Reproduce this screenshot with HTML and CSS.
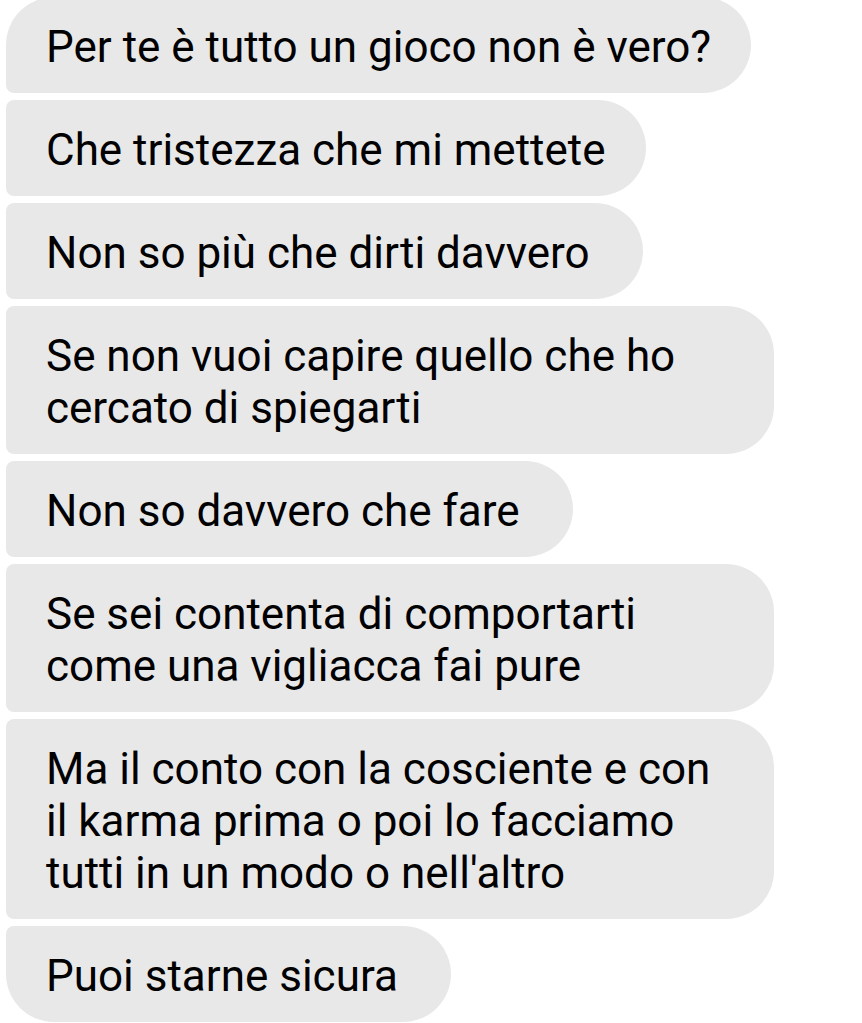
FILE: index.html
```html
<!DOCTYPE html>
<html lang="it">
<head>
<meta charset="utf-8">
<link rel="stylesheet" href="styles.css">
</head>
<body>
<div class="thread">
  <div class="bubble first">Per te è tutto un gioco non è vero?</div>
  <div class="bubble">Che tristezza che mi mettete</div>
  <div class="bubble roomy">Non so più che dirti davvero</div>
  <div class="bubble">Se non vuoi capire quello che ho cercato di spiegarti</div>
  <div class="bubble roomy">Non so davvero che fare</div>
  <div class="bubble">Se sei contenta di comportarti come una vigliacca fai pure</div>
  <div class="bubble">Ma il conto con la cosciente e con il karma prima o poi lo facciamo tutti in un modo o nell'altro</div>
  <div class="bubble roomy last">Puoi starne sicura</div>
</div>
</body>
</html>
```

FILE: styles.css
```css
html, body {
  margin: 0;
  padding: 0;
  background: #ffffff;
}
body {
  font-family: Roboto, "Noto Sans", sans-serif;
  overflow: hidden;
  height: 1023px;
}
.thread {
  display: flex;
  flex-direction: column;
  align-items: flex-start;
  gap: 7px;
  padding-left: 6px;
  margin-top: -3px;
}
.bubble {
  box-sizing: border-box;
  max-width: 768px;
  background: #e8e8e8;
  color: #000000;
  font-size: 44px;
  line-height: 52px;
  padding: 24px 40px 20px 40px;
  border-radius: 8px 48px 48px 8px;
}
.bubble.roomy {
  padding-right: 53px;
}
.bubble.first {
  border-top-left-radius: 48px;
}
.bubble.last {
  border-bottom-left-radius: 48px;
}
```
